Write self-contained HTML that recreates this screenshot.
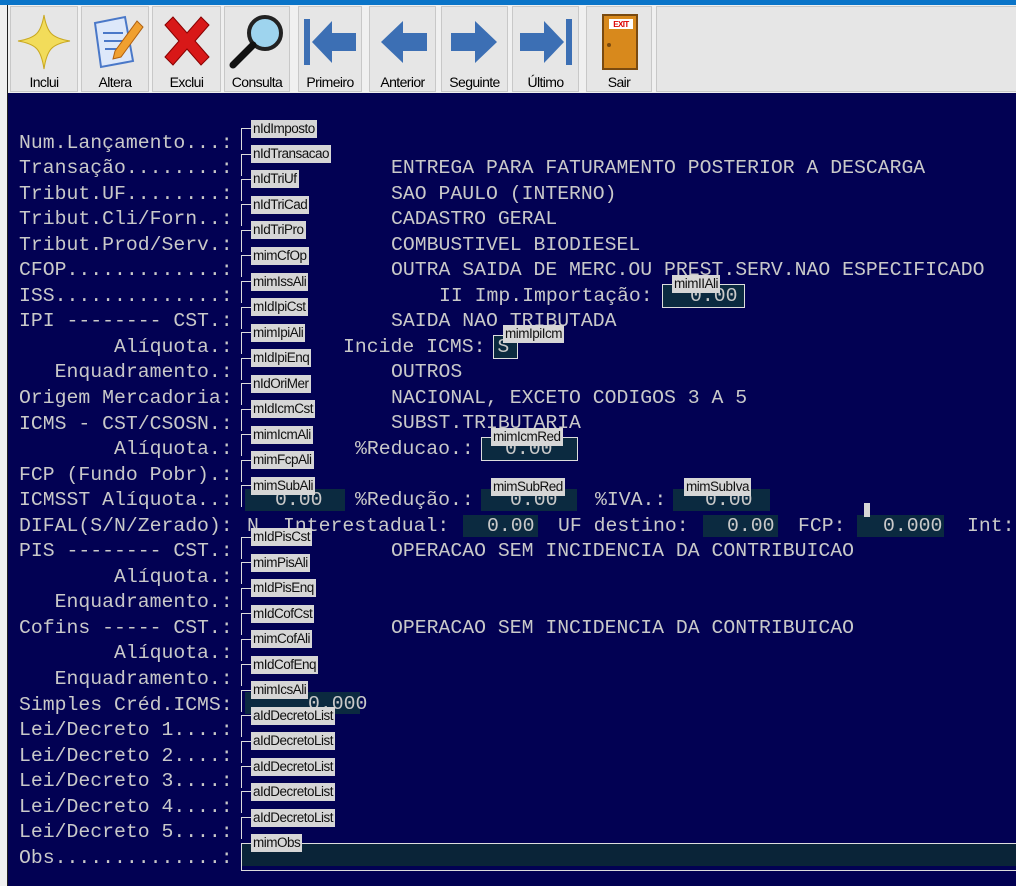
<!DOCTYPE html>
<html><head><meta charset="utf-8"><style>
*{margin:0;padding:0;box-sizing:border-box}
html,body{width:1016px;height:886px;overflow:hidden}
body{background:#f0f0f0;position:relative;font-family:"Liberation Sans",sans-serif}
.top{position:absolute;left:0;top:0;width:1016px;height:5px;background:#0a74c8}
.lstrip{position:absolute;left:0;top:5px;width:8px;height:881px;background:#f0f0f0;border-right:1px solid #222}
.btn{position:absolute;top:6px;height:86px;background:#e6e6e6;border:1px solid #c8c8c8;font-size:14px;letter-spacing:-0.6px;text-align:center;color:#000}
.btn span{position:absolute;bottom:1px;left:0;right:0}
.btn svg{position:absolute;left:50%;top:4px;margin-left:-30px}
.panel{position:absolute;left:8px;top:93px;width:1008px;height:793px;background:#020153}
.t{position:absolute;font-family:"Liberation Mono",monospace;font-size:19.8px;color:#c9c9c9;white-space:pre;line-height:25.55px}
.f{position:absolute;background:#0b2a40;height:22px}
.lb{position:absolute;background:#d6d6d6;color:#111;font-size:13.5px;height:18px;line-height:18px;padding:0 2px;letter-spacing:-0.5px;font-family:"Liberation Sans",sans-serif}
.br{position:absolute;border-left:1px solid #ddd;border-top:1px solid #ddd;width:10px;height:22px}
.bx{position:absolute;border:1px solid #ddd}
</style></head><body>
<div class="top"></div>
<div class="lstrip"></div>
<div class="btn" style="left:10px;width:68px"><svg width="60" height="60" viewBox="0 0 60 60"><path d="M30 4 C33 22 38 27 56 30 C38 33 33 38 30 58 C27 38 22 33 4 30 C22 27 27 22 30 4Z" fill="#f2dc5a" stroke="#c9a820"/></svg><span>Inclui</span></div>
<div class="btn" style="left:81px;width:68px"><svg width="60" height="60" viewBox="0 0 60 60"><path d="M10 12 L40 6 L48 50 L16 56Z" fill="#dde8fa" stroke="#4a78c8" stroke-width="2"/><path d="M18 22h20M19 30h20M20 38h20" stroke="#4a78c8" stroke-width="2"/><path d="M30 40 L52 10 L58 16 L36 46 L28 48Z" fill="#f0a030" stroke="#b06010"/></svg><span>Altera</span></div>
<div class="btn" style="left:152px;width:69px"><svg width="60" height="60" viewBox="0 0 60 60"><path d="M8 14 L16 6 L30 22 L44 6 L52 14 L38 30 L52 46 L44 54 L30 38 L16 54 L8 46 L22 30Z" fill="#d81818" stroke="#800"/></svg><span>Exclui</span></div>
<div class="btn" style="left:224px;width:66px"><svg width="60" height="60" viewBox="0 0 60 60"><circle cx="38" cy="22" r="16" fill="#9ed4ee" stroke="#222" stroke-width="4"/><path d="M26 34 L6 54" stroke="#111" stroke-width="7" stroke-linecap="round"/></svg><span>Consulta</span></div>
<div class="btn" style="left:298px;width:64px"><svg width="60" height="60" viewBox="0 0 60 60"><rect x="4" y="8" width="6" height="46" fill="#3c6fb4"/><path d="M12 31 L32 10 L32 22 L56 22 L56 40 L32 40 L32 52Z" fill="#3c6fb4"/></svg><span>Primeiro</span></div>
<div class="btn" style="left:369px;width:67px"><svg width="60" height="60" viewBox="0 0 60 60"><path d="M8 31 L30 10 L30 22 L54 22 L54 40 L30 40 L30 52Z" fill="#3c6fb4"/></svg><span>Anterior</span></div>
<div class="btn" style="left:441px;width:67px"><svg width="60" height="60" viewBox="0 0 60 60"><path d="M52 31 L30 10 L30 22 L6 22 L6 40 L30 40 L30 52Z" fill="#3c6fb4"/></svg><span>Seguinte</span></div>
<div class="btn" style="left:512px;width:67px"><svg width="60" height="60" viewBox="0 0 60 60"><path d="M48 31 L28 10 L28 22 L4 22 L4 40 L28 40 L28 52Z" fill="#3c6fb4"/><rect x="50" y="8" width="6" height="46" fill="#3c6fb4"/></svg><span>Último</span></div>
<div class="btn" style="left:586px;width:66px"><svg width="60" height="60" viewBox="0 0 60 60"><rect x="14" y="4" width="34" height="54" fill="#d8891c" stroke="#7a4a10" stroke-width="2"/><rect x="20" y="8" width="24" height="10" fill="#fff"/><text x="32" y="16" font-size="8" font-weight="bold" fill="#d00" text-anchor="middle" font-family="Liberation Sans">EXIT</text><circle cx="20" cy="34" r="2" fill="#7a4a10"/></svg><span>Sair</span></div>
<div class="btn" style="left:656px;width:400px;border-right:none"></div>

<div class="panel"></div>
<div class="f" style="left:662px;top:285px;width:82px"></div>
<div class="f" style="left:493px;top:336px;width:24px"></div>
<div class="f" style="left:481px;top:438px;width:96px"></div>
<div class="f" style="left:245px;top:489px;width:100px"></div>
<div class="f" style="left:481px;top:489px;width:96px"></div>
<div class="f" style="left:673px;top:489px;width:97px"></div>
<div class="f" style="left:463px;top:515px;width:75px"></div>
<div class="f" style="left:703px;top:515px;width:75px"></div>
<div class="f" style="left:857px;top:515px;width:87px"></div>
<div class="f" style="left:245px;top:692px;width:115px"></div>
<div class="f" style="left:241px;top:844px;width:775px;background:#0a2438"></div>
<div class="bx" style="left:241px;top:843px;width:780px;height:28px"></div>
<div class="bx" style="left:662px;top:284px;width:83px;height:24px"></div>
<div class="bx" style="left:493px;top:335px;width:25px;height:24px"></div>
<div class="bx" style="left:481px;top:437px;width:97px;height:24px"></div>

<div class="t" style="left:19px;top:130.5px">Num.Lançamento...:
Transação........:
Tribut.UF........:
Tribut.Cli/Forn..:
Tribut.Prod/Serv.:
CFOP.............:
ISS..............:
IPI -------- CST.:
        Alíquota.:
   Enquadramento.:
Origem Mercadoria:
ICMS - CST/CSOSN.:
        Alíquota.:
FCP (Fundo Pobr).:
ICMSST Alíquota..:
DIFAL(S/N/Zerado):
PIS -------- CST.:
        Alíquota.:
   Enquadramento.:
Cofins ----- CST.:
        Alíquota.:
   Enquadramento.:
Simples Créd.ICMS:
Lei/Decreto 1....:
Lei/Decreto 2....:
Lei/Decreto 3....:
Lei/Decreto 4....:
Lei/Decreto 5....:
Obs..............:</div>
<div class="t" style="left:391px;top:156px">ENTREGA PARA FATURAMENTO POSTERIOR A DESCARGA
SAO PAULO (INTERNO)
CADASTRO GERAL
COMBUSTIVEL BIODIESEL
OUTRA SAIDA DE MERC.OU PREST.SERV.NAO ESPECIFICADO

SAIDA NAO TRIBUTADA

OUTROS
NACIONAL, EXCETO CODIGOS 3 A 5
SUBST.TRIBUTARIA</div>
<div class="t" style="left:439px;top:284px">II Imp.Importação:</div>
<div class="t" style="left:690px;top:284px">0.00</div>
<div class="t" style="left:343px;top:335px">Incide ICMS: S</div>
<div class="t" style="left:355px;top:437px">%Reducao.:</div>
<div class="t" style="left:505px;top:437px">0.00</div>
<div class="t" style="left:275px;top:488px">0.00</div>
<div class="t" style="left:355px;top:488px">%Redução.:</div>
<div class="t" style="left:510px;top:488px">0.00</div>
<div class="t" style="left:595px;top:488px">%IVA.:</div>
<div class="t" style="left:705px;top:488px">0.00</div>
<div class="t" style="left:247px;top:514px">N</div>
<div class="t" style="left:283px;top:514px">Interestadual:</div>
<div class="t" style="left:487px;top:514px">0.00</div>
<div class="t" style="left:558px;top:514px">UF destino:</div>
<div class="t" style="left:727px;top:514px">0.00</div>
<div class="t" style="left:798px;top:514px">FCP:</div>
<div class="t" style="left:883px;top:514px">0.000</div>
<div class="t" style="left:967px;top:514px">Int:</div>
<div class="t" style="left:391px;top:539px">OPERACAO SEM INCIDENCIA DA CONTRIBUICAO</div>
<div class="t" style="left:391px;top:616px">OPERACAO SEM INCIDENCIA DA CONTRIBUICAO</div>
<div class="t" style="left:308px;top:692px">0.000</div>

<div class="br" style="left:241px;top:128px"></div><div class="br" style="left:241px;top:154px"></div><div class="br" style="left:241px;top:179px"></div><div class="br" style="left:241px;top:204px"></div><div class="br" style="left:241px;top:230px"></div><div class="br" style="left:241px;top:255px"></div><div class="br" style="left:241px;top:281px"></div><div class="br" style="left:241px;top:307px"></div><div class="br" style="left:241px;top:332px"></div><div class="br" style="left:241px;top:358px"></div><div class="br" style="left:241px;top:383px"></div><div class="br" style="left:241px;top:409px"></div><div class="br" style="left:241px;top:434px"></div><div class="br" style="left:241px;top:460px"></div><div class="br" style="left:241px;top:485px"></div><div class="br" style="left:241px;top:537px"></div><div class="br" style="left:241px;top:562px"></div><div class="br" style="left:241px;top:588px"></div><div class="br" style="left:241px;top:613px"></div><div class="br" style="left:241px;top:639px"></div><div class="br" style="left:241px;top:664px"></div><div class="br" style="left:241px;top:690px"></div><div class="br" style="left:241px;top:715px"></div><div class="br" style="left:241px;top:741px"></div><div class="br" style="left:241px;top:766px"></div><div class="br" style="left:241px;top:791px"></div><div class="br" style="left:241px;top:817px"></div>

<div class="lb" style="left:251px;top:120px">nIdImposto</div>
<div class="lb" style="left:251px;top:145px">nIdTransacao</div>
<div class="lb" style="left:251px;top:170px">nIdTriUf</div>
<div class="lb" style="left:251px;top:196px">nIdTriCad</div>
<div class="lb" style="left:251px;top:221px">nIdTriPro</div>
<div class="lb" style="left:251px;top:247px">mimCfOp</div>
<div class="lb" style="left:251px;top:273px">mimIssAli</div>
<div class="lb" style="left:251px;top:298px">mIdIpiCst</div>
<div class="lb" style="left:251px;top:324px">mimIpiAli</div>
<div class="lb" style="left:251px;top:349px">mIdIpiEnq</div>
<div class="lb" style="left:251px;top:375px">nIdOriMer</div>
<div class="lb" style="left:251px;top:400px">mIdIcmCst</div>
<div class="lb" style="left:251px;top:426px">mimIcmAli</div>
<div class="lb" style="left:251px;top:451px">mimFcpAli</div>
<div class="lb" style="left:251px;top:477px">mimSubAli</div>
<div class="lb" style="left:251px;top:528px">mIdPisCst</div>
<div class="lb" style="left:251px;top:554px">mimPisAli</div>
<div class="lb" style="left:251px;top:579px">mIdPisEnq</div>
<div class="lb" style="left:251px;top:605px">mIdCofCst</div>
<div class="lb" style="left:251px;top:630px">mimCofAli</div>
<div class="lb" style="left:251px;top:656px">mIdCofEnq</div>
<div class="lb" style="left:251px;top:681px">mimIcsAli</div>
<div class="lb" style="left:251px;top:707px">aIdDecretoList</div>
<div class="lb" style="left:251px;top:732px">aIdDecretoList</div>
<div class="lb" style="left:251px;top:758px">aIdDecretoList</div>
<div class="lb" style="left:251px;top:783px">aIdDecretoList</div>
<div class="lb" style="left:251px;top:809px">aIdDecretoList</div>
<div class="lb" style="left:251px;top:834px">mimObs</div>
<div class="lb" style="left:672px;top:275px">mimIIAli</div>
<div class="lb" style="left:503px;top:325px">mimIpiIcm</div>
<div class="lb" style="left:491px;top:428px">mimIcmRed</div>
<div class="lb" style="left:491px;top:478px">mimSubRed</div>
<div class="lb" style="left:684px;top:478px">mimSubIva</div>
<div class="lb" style="left:864px;top:503px;width:6px;padding:0;height:14px"></div>
</body></html>
